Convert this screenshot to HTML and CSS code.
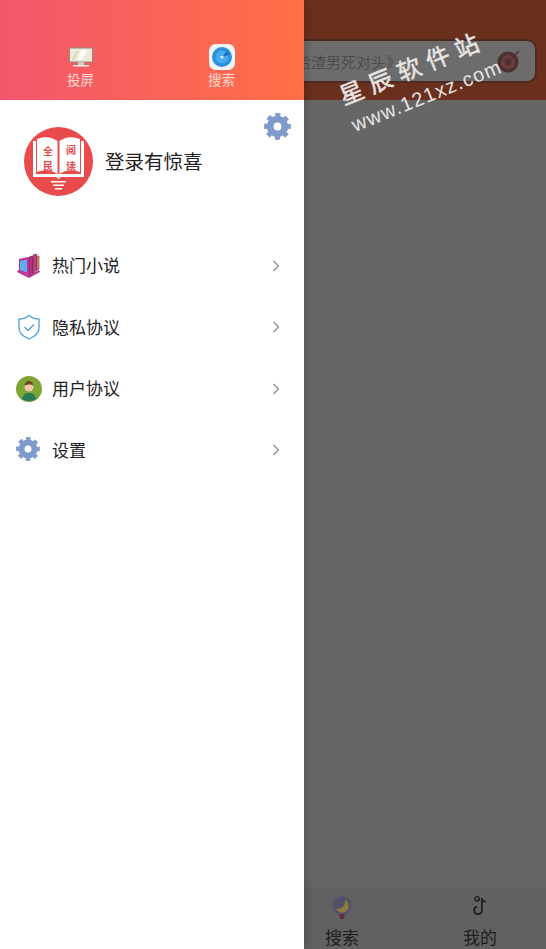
FILE: index.html
```html
<!DOCTYPE html>
<html lang="zh-CN">
<head>
    <meta charset="UTF-8">
    <meta name="viewport" content="width=device-width, initial-scale=1.0">
    <title>全民阅读</title>
    <link rel="stylesheet" href="styles.css">
</head>
<body>
    <div class="screen">
        <aside class="drawer">
            <div class="drawer-head">
                <div class="head-tab">
                    <svg class="tab-icon" viewBox="0 0 26 22">
                        <rect x="1.500" y="2" width="23" height="14" fill="#eeeadb" stroke="#8b8b80"/>
                        <path d="M9 14l5-10h5l-5 10z" fill="#fff"/>
                        <path d="M4 14l4-9h2l-4 9z" fill="#d8d6a8"/>
                        <rect x="10" y="16" width="6" height="3" fill="#cfcfc6"/>
                        <rect x="5" y="19" width="16" height="1.500" fill="#f3f3ee"/>
                    </svg>
                    <span>投屏</span>
                </div>
                <div class="head-tab">
                    <svg class="tab-icon" viewBox="0 0 26 26">
                        <rect width="26" height="26" rx="7" fill="#eef5fb"/>
                        <circle cx="13" cy="13" r="10" fill="#2c8fe0"/>
                        <circle cx="13" cy="13" r="6.500" fill="#45abea"/>
                        <path d="M13 13l5-6a8 8 0 0 1 2 4z" fill="#1d6fc0"/>
                        <circle cx="13" cy="13" r="1.600" fill="#d6f0fb"/>
                    </svg>
                    <span>搜索</span>
                </div>
            </div>

            <div class="profile">
                <svg class="avatar" viewBox="0 0 69 69">
                    <circle cx="34.500" cy="34.500" r="34.500" fill="#e94a4b"/>
                    <path d="M9 14v36h23l2.500 2 2.500-2h23V14h-3v33H12V14z" fill="#fff"/>
                    <path d="M13 12c8-3 15-2 20.500 2v33C28 43 21 42 13 45z" fill="#fff"/>
                    <path d="M56 12c-8-3-15-2-20.500 2v33C41 43 48 42 56 45z" fill="#fff"/>
                    <text class="avatar-char" x="24" y="28">全</text>
                    <text class="avatar-char" x="24" y="43">民</text>
                    <text class="avatar-char" x="47" y="27">阅</text>
                    <text class="avatar-char" x="47" y="43">读</text>
                    <path d="M27 54h15v1.500H27zM29 57.500h11V59H29zM31 61h7v1.500h-7z" fill="#fff"/>
                </svg>
                <span class="profile-name">登录有惊喜</span>
                <svg class="profile-gear" viewBox="0 0 24 24">
                    <use href="#gear"/>
                </svg>
            </div>

            <ul class="menu">
                <li class="menu-row">
                    <svg class="menu-icon" viewBox="0 0 26 26">
                        <path d="M1 19l12 6 11-6-1-2-10 5-11-5z" fill="#c2318f"/>
                        <path d="M13 4l3-1 1 1v16l-4 2z" fill="#b5327f" stroke="#5b2a6b" stroke-width=".6"/>
                        <path d="M17 2l3-1 1 1v15l-4 3z" fill="#c83f74" stroke="#5b2a6b" stroke-width=".6"/>
                        <path d="M21 4l2-1v13l-2 1z" fill="#e6a83a" stroke="#5b2a6b" stroke-width=".6"/>
                        <path d="M3 6l9-2 1 1v17L3 18z" fill="#c2318f"/>
                        <path d="M4 8l7-1.500v13L4 17z" fill="#5ab0f0"/>
                    </svg>
                    <span class="menu-label">热门小说</span>
                    <svg class="chevron" viewBox="0 0 8 12"><path d="M1.500 1l5 5-5 5"/></svg>
                </li>
                <li class="menu-row">
                    <svg class="menu-icon" viewBox="0 0 26 26">
                        <path d="M13 1.500c3 2.500 6 3.500 10 3.500v9c0 5-4 8.500-10 11C7 22.500 3 19 3 14V5c4 0 7-1 10-3.500z" fill="#fff" stroke="#4d9fd6" stroke-width="1.300"/>
                        <path d="M8.500 13l3.500 3.500 6-6" fill="none" stroke="#4d9fd6" stroke-width="1.300"/>
                    </svg>
                    <span class="menu-label">隐私协议</span>
                    <svg class="chevron" viewBox="0 0 8 12"><path d="M1.500 1l5 5-5 5"/></svg>
                </li>
                <li class="menu-row">
                    <svg class="menu-icon" viewBox="0 0 26 26">
                        <circle cx="13" cy="13" r="13" fill="#7fa535"/>
                        <path d="M6 23c1-5 4-6 7-6s6 1 7 6a13 13 0 0 1-14 0z" fill="#2a7a5a"/>
                        <circle cx="13" cy="11" r="4.500" fill="#f0c8a8"/>
                        <path d="M8.500 10c0-3 2-5 4.500-5s4.500 2 4.500 5c-2-2-6-2-9 0z" fill="#6b4a2c"/>
                    </svg>
                    <span class="menu-label">用户协议</span>
                    <svg class="chevron" viewBox="0 0 8 12"><path d="M1.500 1l5 5-5 5"/></svg>
                </li>
                <li class="menu-row">
                    <svg class="menu-icon" viewBox="0 0 26 26">
                        <g id="gear" fill="none" stroke="#7f9bcb">
                            <circle cx="12" cy="12" r="6.500" stroke-width="6"/>
                            <circle cx="12" cy="12" r="10.200" stroke-width="3.400" stroke-dasharray="4.400 3.610" transform="rotate(-12.400 12 12)"/>
                        </g>
                    </svg>
                    <span class="menu-label">设置</span>
                    <svg class="chevron" viewBox="0 0 8 12"><path d="M1.500 1l5 5-5 5"/></svg>
                </li>
            </ul>
        </aside>

        <main class="behind">
            <div class="behind-head">
                <div class="search-bar">
                    <span class="search-text">给渣男死对头》</span>
                    <svg class="target" viewBox="0 0 26 26">
                        <circle cx="12" cy="14" r="10.500" fill="#4a3232"/>
                        <circle cx="12" cy="14" r="7" fill="#6f3c3c"/>
                        <circle cx="12" cy="14" r="3.500" fill="#4a3232"/>
                        <path d="M12 14L23 3" stroke="#4a3232" stroke-width="1.500"/>
                    </svg>
                </div>
            </div>
            <div class="behind-body"></div>
            <nav class="behind-nav">
                <div class="nav-item">
                    <svg class="nav-icon" viewBox="0 0 22 26">
                        <path d="M11 1a10 10 0 0 1 10 10c0 5-3 7.500-6 9l-2 5H9l-2-5c-3-1.500-6-4-6-9A10 10 0 0 1 11 1z" fill="#55506a"/>
                        <path d="M14 5a7 7 0 0 1-1 13c-4 1-7-1-8-4 5 2 10-3 9-9z" fill="#8b7a3a"/>
                        <path d="M8 20h6l-1.500 5h-3z" fill="#6d2438"/>
                    </svg>
                    <span>搜索</span>
                </div>
                <div class="nav-item">
                    <svg class="nav-icon" viewBox="0 0 22 26">
                        <circle cx="8" cy="4" r="2.300" fill="none" stroke="#1e1e1e" stroke-width="1.500"/>
                        <path d="M13 3v13a4 4 0 1 1-5-4M13 4c.5 2 2 3 4 3" fill="none" stroke="#1e1e1e" stroke-width="1.800"/>
                    </svg>
                    <span>我的</span>
                </div>
            </nav>
            <div class="watermark">
                <div class="mark-cn">星辰软件站</div>
                <div class="mark-en">www.121xz.com</div>
            </div>
        </main>
    </div>
</body>
</html>
```

FILE: styles.css
```css
* {
    box-sizing: border-box;
}
body {
    margin: 0;
    font-family: "Noto Sans CJK SC", "Liberation Sans", sans-serif;
}
.screen {
    display: flex;
    width: 546px;
    height: 949px;
    overflow: hidden;
}
.drawer {
    position: relative;
    z-index: 2;
    flex: 0 0 304px;
    background-color: #fff;
    box-shadow: 2px 0 8px rgba(0, 0, 0, 0.18);
}
.drawer-head {
    display: flex;
    height: 100px;
    padding: 44px 12px 0 10px;
    background: linear-gradient(90deg, #f2566c, #ff7047);
}
.head-tab {
    flex: 1;
    display: flex;
    flex-direction: column;
    align-items: center;
    color: #fbdcd2;
    font-size: 13.500px;
    line-height: 18px;
}
.tab-icon {
    width: 26px;
    height: 26px;
}
.profile {
    position: relative;
    display: flex;
    align-items: center;
    height: 135px;
    padding: 0 0 13px 24px;
}
.avatar {
    width: 69px;
    height: 69px;
    margin-right: 12px;
}
.avatar-char {
    font-family: "Noto Sans CJK SC", sans-serif;
    font-size: 10px;
    font-weight: 700;
    fill: #e94a4b;
    text-anchor: middle;
}
.profile-name {
    font-size: 19.500px;
    color: #222;
    margin-top: -2px;
}
.profile-gear {
    position: absolute;
    top: 13px;
    right: 13px;
    width: 27px;
    height: 27px;
}
.menu {
    list-style: none;
    margin: 0;
    padding: 0;
}
.menu-row {
    display: flex;
    align-items: center;
    height: 61.500px;
    padding: 0 24px 0 16px;
}
.menu-icon {
    flex: 0 0 26px;
    width: 26px;
    height: 26px;
    margin-right: 10px;
}
.menu-label {
    flex: 1;
    font-size: 17px;
    color: #222;
    margin-top: -2px;
}
.chevron {
    width: 8px;
    height: 12px;
    fill: none;
    stroke: #8a8a8a;
    stroke-width: 1.200;
}
.behind {
    position: relative;
    flex: 1;
    display: flex;
    flex-direction: column;
    background-color: #666;
}
.behind-head {
    height: 100px;
    padding-top: 39px;
    background-color: #6b2f1e;
}
.search-bar {
    display: flex;
    align-items: center;
    justify-content: space-between;
    width: 253px;
    height: 44px;
    margin-left: -20px;
    padding: 0 13px 0 10px;
    background-color: #6c6c6c;
    border: 2px solid #4f2a22;
    border-radius: 10px;
}
.search-text {
    font-size: 15px;
    color: #4c4c4c;
}
.target {
    width: 26px;
    height: 26px;
}
.behind-body {
    flex: 1;
}
.behind-nav {
    display: flex;
    height: 62px;
    margin: 0 -3px 0 -31px;
    padding-top: 8px;
    background-color: #616161;
}
.nav-item {
    flex: 1;
    display: flex;
    flex-direction: column;
    align-items: center;
    font-size: 17px;
    line-height: 24px;
    color: #1e1e1e;
}
.nav-icon {
    width: 22px;
    height: 26px;
    margin-bottom: 5px;
}
.watermark {
    position: absolute;
    top: 49px;
    left: 18px;
    width: 190px;
    transform: rotate(-22deg);
    color: #e8e4e2;
    text-align: center;
}
.mark-cn {
    font-size: 24px;
    line-height: 34px;
    letter-spacing: 7px;
    -webkit-text-stroke: 0.5px #e8e4e2;
}
.mark-en {
    margin-top: 3px;
    padding-left: 6px;
    font-family: "Liberation Sans", sans-serif;
    font-size: 20px;
    line-height: 24px;
    letter-spacing: 1.200px;
}
```
